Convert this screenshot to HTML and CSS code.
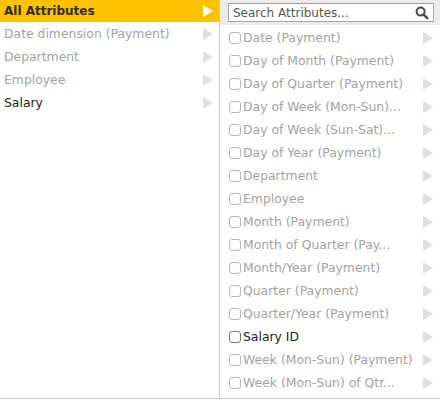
FILE: index.html
```html
<!DOCTYPE html>
<html>
<head>
<meta charset="utf-8">
<link rel="stylesheet" href="styles.css">
</head>
<body>
<div class="picker">
  <div class="groups">
    <div class="grow active"><span class="label">All Attributes</span><span class="arrow"></span></div>
    <div class="grow muted"><span class="label">Date dimension (Payment)</span><span class="arrow"></span></div>
    <div class="grow muted"><span class="label">Department</span><span class="arrow"></span></div>
    <div class="grow muted"><span class="label">Employee</span><span class="arrow"></span></div>
    <div class="grow"><span class="label">Salary</span><span class="arrow"></span></div>
  </div>
  <div class="attrs">
    <div class="search-bar">
      <div class="search">
        <span class="placeholder">Search Attributes...</span>
        <svg class="mag" width="14" height="14" viewBox="0 0 14 14"><circle cx="5.6" cy="5.6" r="4" fill="none" stroke="#4a4a4a" stroke-width="2"/><path d="M8.6 8.6 L12.2 12.2" stroke="#4a4a4a" stroke-width="2.6" stroke-linecap="round"/></svg>
      </div>
    </div>
    <div class="list">
      <div class="arow muted"><span class="cb"></span><span class="label">Date (Payment)</span><span class="arrow"></span></div>
      <div class="arow muted"><span class="cb"></span><span class="label">Day of Month (Payment)</span><span class="arrow"></span></div>
      <div class="arow muted"><span class="cb"></span><span class="label">Day of Quarter (Payment)</span><span class="arrow"></span></div>
      <div class="arow muted"><span class="cb"></span><span class="label">Day of Week (Mon-Sun)...</span><span class="arrow"></span></div>
      <div class="arow muted"><span class="cb"></span><span class="label">Day of Week (Sun-Sat)...</span><span class="arrow"></span></div>
      <div class="arow muted"><span class="cb"></span><span class="label">Day of Year (Payment)</span><span class="arrow"></span></div>
      <div class="arow muted"><span class="cb"></span><span class="label">Department</span><span class="arrow"></span></div>
      <div class="arow muted"><span class="cb"></span><span class="label">Employee</span><span class="arrow"></span></div>
      <div class="arow muted"><span class="cb"></span><span class="label">Month (Payment)</span><span class="arrow"></span></div>
      <div class="arow muted"><span class="cb"></span><span class="label">Month of Quarter (Pay...</span><span class="arrow"></span></div>
      <div class="arow muted"><span class="cb"></span><span class="label">Month/Year (Payment)</span><span class="arrow"></span></div>
      <div class="arow muted"><span class="cb"></span><span class="label">Quarter (Payment)</span><span class="arrow"></span></div>
      <div class="arow muted"><span class="cb"></span><span class="label">Quarter/Year (Payment)</span><span class="arrow"></span></div>
      <div class="arow"><span class="cb"></span><span class="label">Salary ID</span><span class="arrow"></span></div>
      <div class="arow muted"><span class="cb"></span><span class="label">Week (Mon-Sun) (Payment)</span><span class="arrow"></span></div>
      <div class="arow muted"><span class="cb"></span><span class="label">Week (Mon-Sun) of Qtr...</span><span class="arrow"></span></div>
    </div>
  </div>
</div>
</body>
</html>
```

FILE: styles.css
```css
html, body {
  margin: 0;
  padding: 0;
  background: #fff;
}
body {
  font-family: "DejaVu Sans", sans-serif;
  font-size: 12.4px;
  color: #222;
}
.picker {
  display: flex;
  width: 440px;
  height: 398px;
  border-bottom: 1px solid #c8c8c8;
}
.groups {
  width: 219px;
  border-right: 1px solid #c8c8c8;
  flex: none;
}
.grow {
  display: flex;
  align-items: center;
  height: 23px;
  padding-left: 4px;
  padding-right: 6px;
}
.grow .label {
  flex: 1;
  white-space: nowrap;
}
.grow.active {
  background: #fcc200;
  color: #2f2a1c;
  font-weight: bold;
  font-size: 12px;
  height: 22px;
}
.muted {
  color: #a3a3a3;
}
.arrow {
  width: 0;
  height: 0;
  border-top: 6px solid transparent;
  border-bottom: 6px solid transparent;
  border-left: 10px solid #e0e0e0;
  flex: none;
}
.grow.active .arrow {
  border-left-color: #fff;
}
.attrs {
  flex: 1;
  display: flex;
  flex-direction: column;
}
.search-bar {
  background: #ebebeb;
  height: 25px;
  padding: 3px 6px 0 8px;
  box-sizing: border-box;
}
.search {
  display: flex;
  align-items: center;
  height: 19px;
  box-sizing: border-box;
  background: #fff;
  border: 1px solid #a5a5a5;
  padding: 0 4px 0 4px;
}
.placeholder {
  flex: 1;
  color: #555;
  font-size: 12px;
}
.mag {
  display: block;
}
.list {
  padding-top: 1px;
}
.arow {
  display: flex;
  align-items: center;
  height: 23px;
  padding-left: 9px;
  padding-right: 7px;
}
.arow .label {
  flex: 1;
  white-space: nowrap;
}
.cb {
  width: 10px;
  height: 10px;
  border: 1px solid #b8b8b8;
  border-radius: 3px;
  margin-right: 2px;
  flex: none;
  background: #fff;
}
.arow:not(.muted) .cb {
  border-color: #777;
}
```
